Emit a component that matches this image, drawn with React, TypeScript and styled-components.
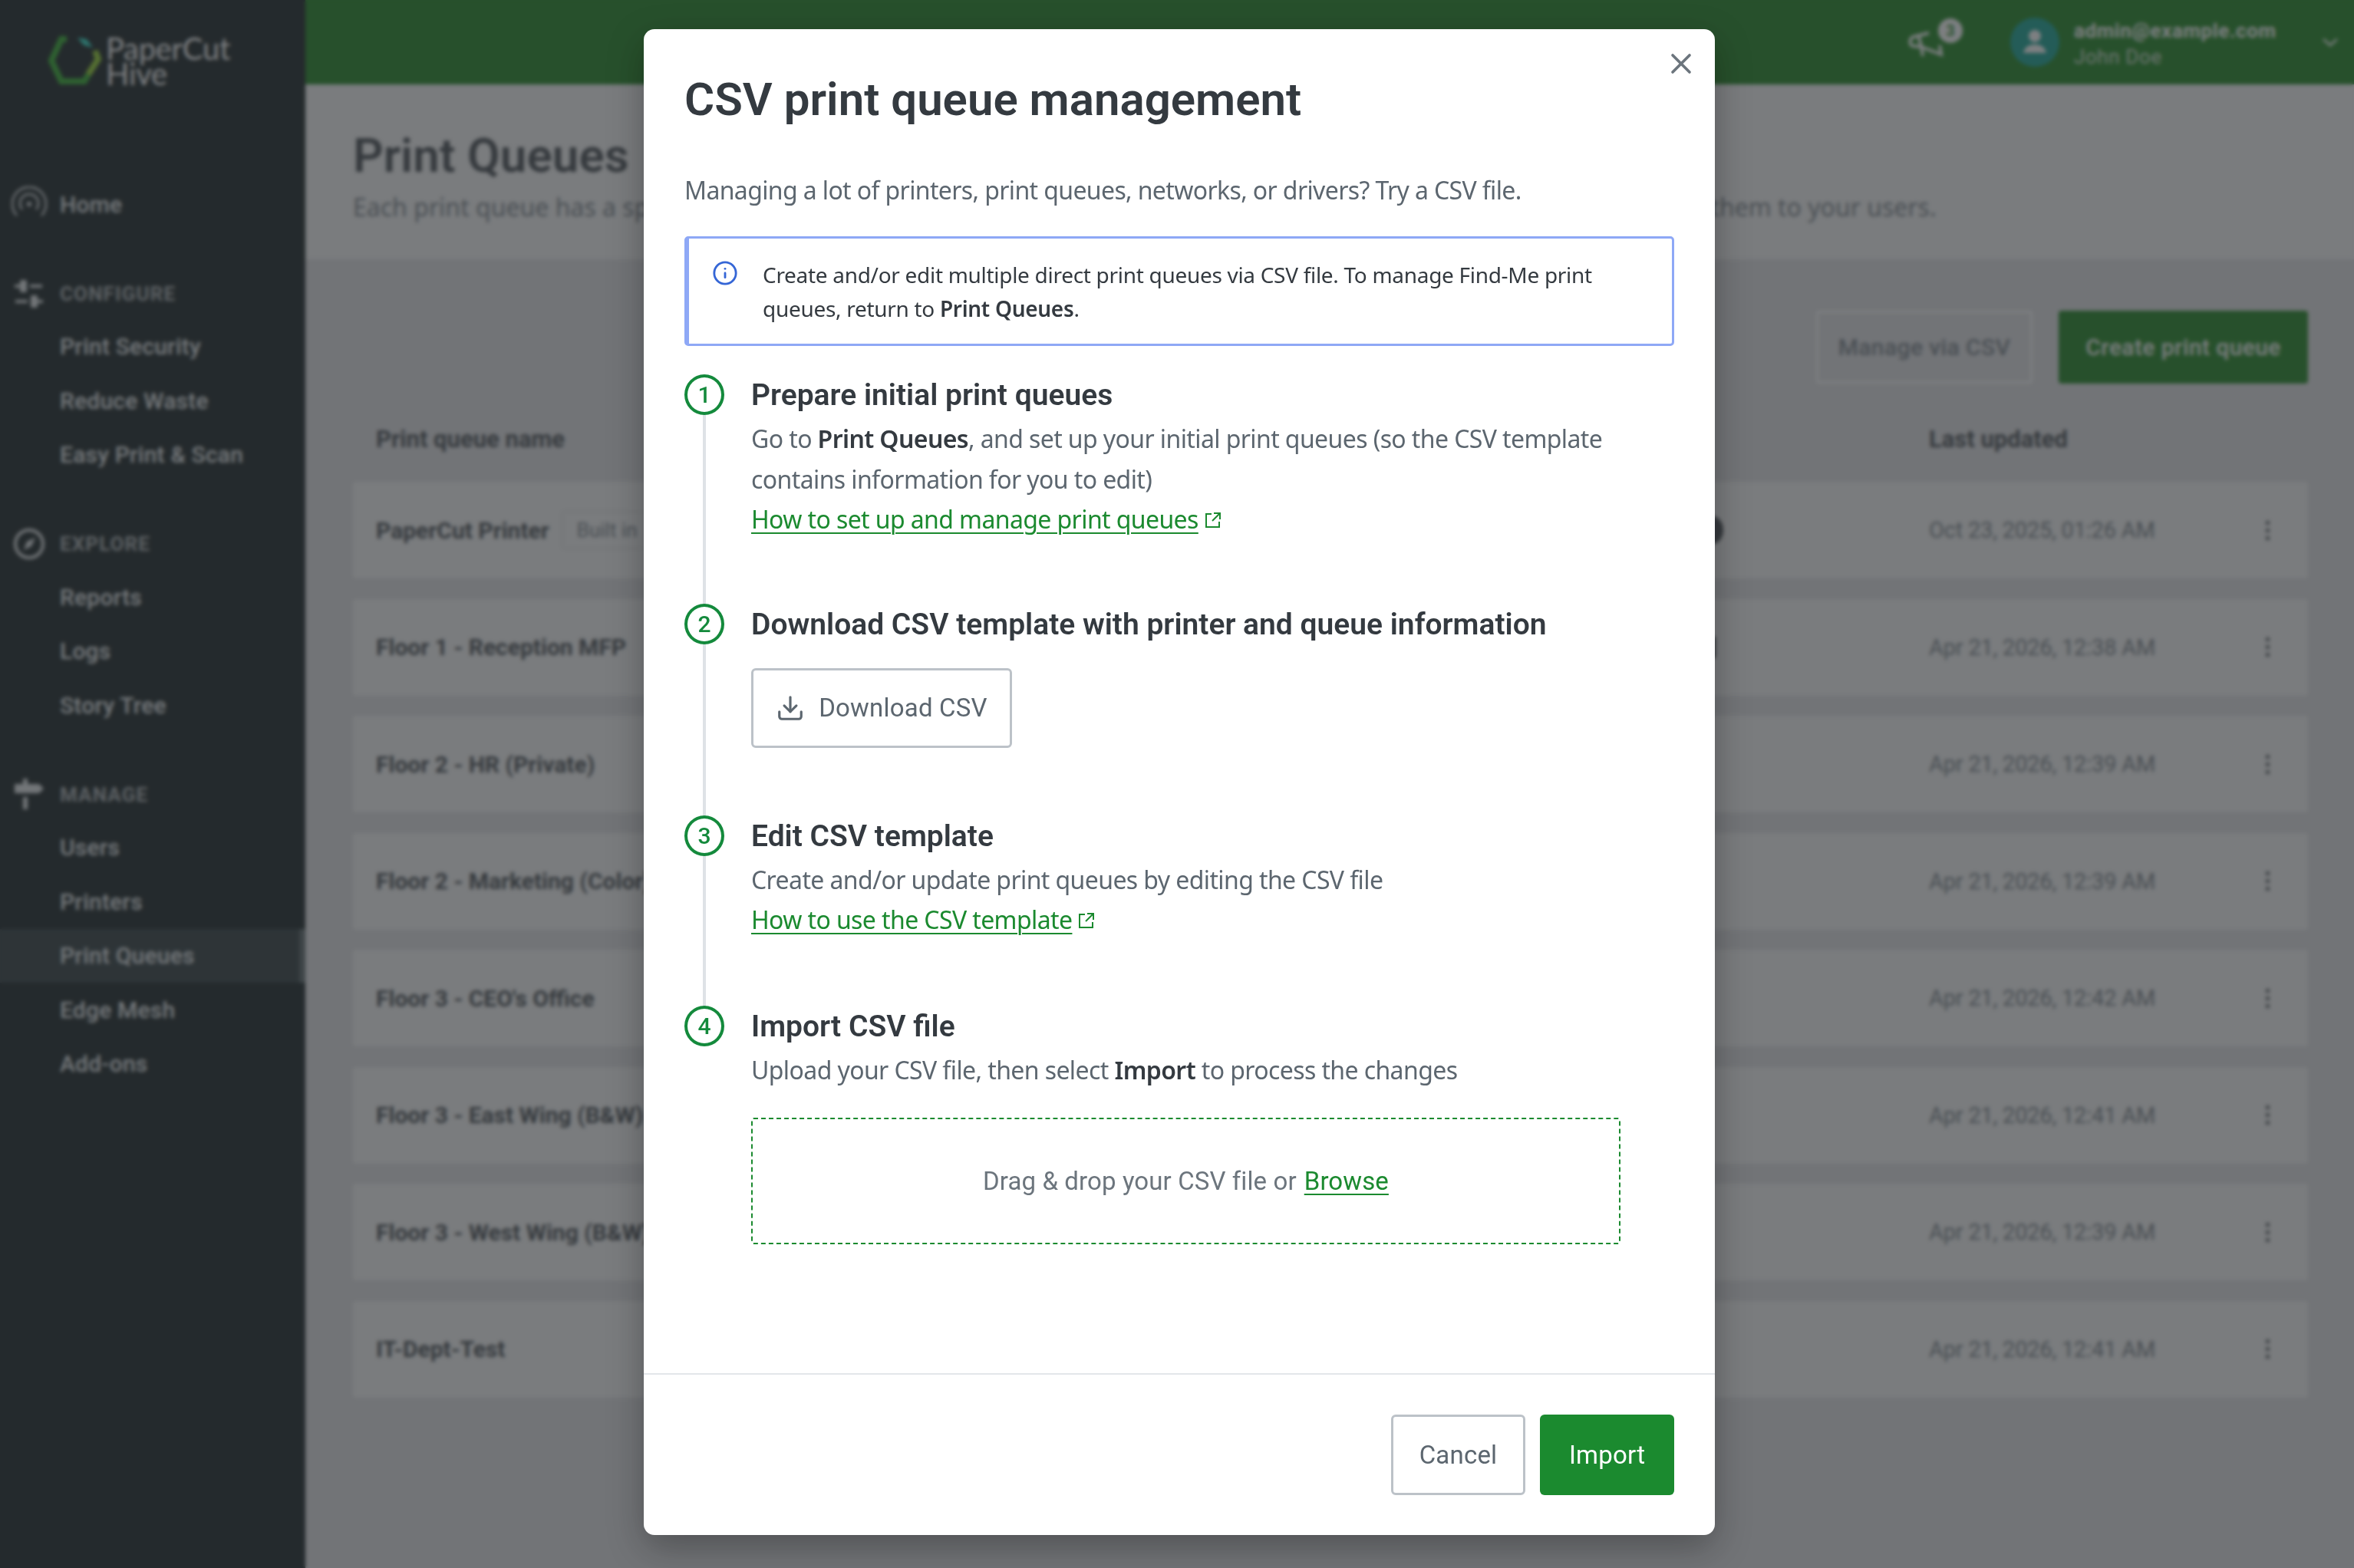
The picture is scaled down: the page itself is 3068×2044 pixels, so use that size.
import React from "react";
import styled, { createGlobalStyle } from "styled-components";
import { Download, Info, X } from "lucide-react";

const GlobalStyle = createGlobalStyle`
  html, body {
    margin: 0;
    padding: 0;
    overflow: hidden;
  }
  * {
    box-sizing: border-box;
  }
`;

const UI_FONT = `Roboto, "Liberation Sans", sans-serif`;
const BODY_FONT = `"Noto Sans", "Liberation Sans", sans-serif`;
const GREEN = "#1b8a2f";

const Shell = styled.div`
  display: flex;
  width: 3068px;
  height: 2044px;
  font-family: ${UI_FONT};
`;

const Sidebar = styled.aside`
  width: 398px;
  flex: none;
  background: #020d0f;
  color: #e8ecee;
`;

const LogoArea = styled.div`
  display: flex;
  gap: 5px;
  height: 231px;
  padding: 47px 0 0 63px;
`;

const LogoText = styled.div`
  font-family: Lato, sans-serif;
  font-size: 40px;
  line-height: 33px;
  letter-spacing: -0.3px;
  color: #ffffff;
`;

const NavRow = styled.div<{ $active?: boolean }>`
  display: flex;
  align-items: center;
  height: 70.5px;
  padding-left: 78px;
  font-size: 30px;
  font-weight: 500;
  letter-spacing: 0.2px;
  background: ${(p) => (p.$active ? "#1d2a2d" : "transparent")};
  border-right: ${(p) => (p.$active ? "8px solid #4c5a5d" : "0")};
`;

const Home = styled(NavRow)`
  gap: 17px;
  padding-left: 15px;
`;

const GroupHeader = styled.div`
  display: flex;
  align-items: center;
  gap: 17px;
  height: 68px;
  margin-top: 47px;
  padding-left: 15px;
  font-size: 26px;
  font-weight: 700;
  letter-spacing: 1.1px;
  color: #a3a9ac;
`;

const NavIcon = styled.svg`
  width: 46px;
  height: 46px;
  flex: none;
  color: #dfe3e5;
`;

const Main = styled.main`
  flex: 1;
  min-width: 0;
  display: flex;
  flex-direction: column;
  background: #dfdfe2;
`;

const TopBar = styled.header`
  display: flex;
  align-items: center;
  justify-content: flex-end;
  height: 110px;
  padding-right: 20px;
  background: #0a7a0c;
  color: #ffffff;
`;

const Bell = styled.div`
  position: relative;
  width: 50px;
  height: 44px;
  margin: 8px 84px 0 0;
`;

const BellBadge = styled.span`
  position: absolute;
  top: -13px;
  right: -22px;
  width: 32px;
  height: 32px;
  border-radius: 50%;
  background: #ffffff;
  color: #0a7a0c;
  font-size: 20px;
  font-weight: 700;
  line-height: 32px;
  text-align: center;
`;

const Avatar = styled.div`
  display: flex;
  align-items: center;
  justify-content: center;
  width: 64px;
  height: 64px;
  margin-right: 19px;
  border-radius: 50%;
  background: #009b89;
`;

const UserText = styled.div`
  width: 323px;
  padding-top: 3px;
  font-size: 26px;
  line-height: 34px;
`;

const UserEmail = styled.div`
  font-weight: 700;
  letter-spacing: 0.6px;
`;

const UserName = styled.div`
  color: #d6e2d6;
  letter-spacing: 0.6px;
`;

const PageHeader = styled.div`
  height: 228px;
  padding: 58px 0 0 62px;
  background: #f5f5f5;
`;

const PageTitle = styled.h1`
  margin: 0;
  font-size: 62px;
  line-height: 70px;
  font-weight: 600;
  color: #343a40;
`;

const PageSub = styled.p`
  margin: 10px 0 0;
  font-family: ${BODY_FONT};
  font-size: 32px;
  line-height: 44px;
  white-space: nowrap;
  color: #6c757d;
`;

const Toolbar = styled.div`
  display: flex;
  justify-content: flex-end;
  gap: 34px;
  padding: 67px 60px 0 0;
`;

const BgButton = styled.div<{ $primary?: boolean }>`
  display: flex;
  align-items: center;
  justify-content: center;
  width: ${(p) => (p.$primary ? "325px" : "282px")};
  height: 95px;
  border-radius: 4px;
  border: 3px solid ${(p) => (p.$primary ? "#0a7a0c" : "#ffffff")};
  background: ${(p) => (p.$primary ? "#0a7a0c" : "transparent")};
  color: ${(p) => (p.$primary ? "#ffffff" : "#6c757d")};
  font-size: 30px;
  font-weight: 500;
  letter-spacing: 0.4px;
`;

const queueGrid = `
  display: grid;
  grid-template-columns: 1fr 40px 262px 424px 34px;
  align-items: center;
  padding: 0 36px 0 30px;
  margin: 0 60px 0 62px;
`;

const TableHead = styled.div`
  ${queueGrid}
  height: 128px;
  padding-top: 16px;
  font-size: 31px;
  font-weight: 700;
  color: #343a40;
`;

const LastUpdated = styled.div`
  grid-column: 4;
`;

const Rows = styled.div`
  display: flex;
  flex-direction: column;
  gap: 26.5px;
`;

const Row = styled.div`
  ${queueGrid}
  height: 126px;
  border-radius: 4px;
  background: #f5f5f5;
`;

const NameCell = styled.div`
  display: flex;
  align-items: center;
  gap: 16px;
  font-size: 30px;
  font-weight: 700;
  color: #343a40;
  white-space: nowrap;
  overflow: hidden;
`;

const BuiltIn = styled.span`
  padding: 8px 18px;
  border: 2px solid #e3e3e3;
  border-radius: 4px;
  font-size: 26px;
  font-weight: 400;
  color: #6c757d;
`;

const StatusMark = styled.div<{ $kind?: "dot" | "bar" }>`
  justify-self: center;
  width: ${(p) => (p.$kind === "dot" ? "28px" : "8px")};
  height: ${(p) => (p.$kind === "dot" ? "36px" : "28px")};
  border-radius: ${(p) => (p.$kind === "dot" ? "50%" : "2px")};
  background: ${(p) => (p.$kind ? "#343a40" : "transparent")};
`;

const DateCell = styled.div`
  grid-column: 4;
  font-size: 29px;
  letter-spacing: -0.2px;
  color: #6c757d;
`;

const Kebab = styled.div`
  display: flex;
  flex-direction: column;
  align-items: center;
  gap: 5px;
`;

const KebabDot = styled.span`
  width: 5px;
  height: 5px;
  border-radius: 50%;
  background: #343a40;
`;

/* modal */

const Backdrop = styled.div`
  position: fixed;
  inset: 0;
  padding: 38px 0 0 839px;
  background: rgba(55, 58, 62, 0.65);
  backdrop-filter: blur(2.5px);
`;

const Modal = styled.div`
  position: relative;
  display: flex;
  flex-direction: column;
  width: 1396px;
  height: 1963px;
  border-radius: 14px;
  background: #ffffff;
  box-shadow: 0 16px 48px rgba(0, 0, 0, 0.3);
  font-family: ${BODY_FONT};
`;

const CloseButton = styled.div`
  position: absolute;
  top: 23px;
  right: 22px;
  color: #6c757d;
  line-height: 0;
`;

const ModalBody = styled.div`
  flex: 1;
  padding: 52px 53px 0 53px;
`;

const ModalTitle = styled.h2`
  margin: 0;
  font-family: ${UI_FONT};
  font-size: 60px;
  line-height: 80px;
  font-weight: 600;
  color: #343a40;
`;

const Lead = styled.p`
  margin: 56px 0 0;
  font-size: 32px;
  line-height: 44px;
  letter-spacing: -0.63px;
  color: #5c666f;
`;

const Alert = styled.div`
  display: flex;
  gap: 32px;
  height: 143px;
  margin: 38px 0 37px;
  padding: 25px 40px 0 30px;
  border: 3px solid #8ea8f6;
  border-left-width: 6px;
  border-radius: 5px;
  font-size: 28px;
  line-height: 44px;
  letter-spacing: -0.3px;
  color: #343a40;
`;

const AlertIcon = styled.div`
  flex: none;
  margin-top: 3px;
  color: #3566d6;
  line-height: 0;
`;

const Step = styled.section`
  display: flex;
  gap: 35px;
`;

const Rail = styled.div`
  display: flex;
  flex-direction: column;
  align-items: center;
  width: 52px;
  flex: none;
`;

const StepNumber = styled.div`
  display: flex;
  align-items: center;
  justify-content: center;
  width: 52px;
  height: 53px;
  flex: none;
  border: 4px solid #148a3c;
  border-radius: 50%;
  font-family: ${UI_FONT};
  font-size: 30px;
  font-weight: 500;
  color: #148a3c;
`;

const RailLine = styled.div`
  flex: 1;
  width: 4px;
  background: #dee2e6;
`;

const StepContent = styled.div<{ $gap: number }>`
  flex: 1;
  padding-bottom: ${(p) => p.$gap}px;
`;

const StepTitle = styled.h3`
  margin: 0 0 4px;
  font-family: ${UI_FONT};
  font-size: 39px;
  line-height: 54px;
  font-weight: 600;
  color: #343a40;
`;

const StepText = styled.p`
  margin: 0;
  font-size: 32px;
  line-height: 52.5px;
  letter-spacing: -0.6px;
  color: #5c666f;
`;

const Strong = styled.strong`
  font-weight: 600;
  color: #343a40;
`;

const HelpLink = styled.a`
  color: ${GREEN};
  text-decoration: underline;
  text-underline-offset: 5px;
  text-decoration-thickness: 2px;
`;

const LinkIcon = styled.svg`
  width: 22px;
  height: 22px;
  margin-left: 8px;
  color: ${GREEN};
`;

const Outline = styled.button`
  display: flex;
  align-items: center;
  justify-content: center;
  border: 3px solid #bcc2c8;
  border-radius: 6px;
  background: #ffffff;
  font-family: ${UI_FONT};
  font-size: 33px;
  letter-spacing: 0.2px;
  color: #5c666f;
`;

const DownloadButton = styled(Outline)`
  gap: 18px;
  width: 340px;
  height: 104px;
  margin-top: 30px;
`;

const DropZone = styled.div`
  display: flex;
  align-items: center;
  justify-content: center;
  gap: 10px;
  width: 1133px;
  height: 165px;
  margin-top: 36px;
  border: 2px dashed ${GREEN};
  border-radius: 3px;
  font-family: ${UI_FONT};
  font-size: 33px;
  letter-spacing: 0.1px;
  color: #6c757d;
`;

const ModalFooter = styled.div`
  display: flex;
  justify-content: flex-end;
  gap: 19px;
  padding: 52px 53px 52px 0;
  border-top: 2px solid #e3e6ea;
`;

const CancelButton = styled(Outline)`
  width: 175px;
  height: 105px;
`;

const ImportButton = styled.button`
  width: 175px;
  height: 105px;
  border: 0;
  border-radius: 6px;
  background: ${GREEN};
  color: #ffffff;
  font-family: ${UI_FONT};
  font-size: 33px;
  letter-spacing: 0.2px;
`;

const queues = [
  { name: "PaperCut Printer", date: "Oct 23, 2025, 01:26 AM", builtIn: true, mark: "dot" as const },
  { name: "Floor 1 - Reception MFP", date: "Apr 21, 2026, 12:38 AM", mark: "bar" as const },
  { name: "Floor 2 - HR (Private)", date: "Apr 21, 2026, 12:39 AM" },
  { name: "Floor 2 - Marketing (Color)", date: "Apr 21, 2026, 12:39 AM" },
  { name: "Floor 3 - CEO's Office", date: "Apr 21, 2026, 12:42 AM" },
  { name: "Floor 3 - East Wing (B&W)", date: "Apr 21, 2026, 12:41 AM" },
  { name: "Floor 3 - West Wing (B&W)", date: "Apr 21, 2026, 12:39 AM" },
  { name: "IT-Dept-Test", date: "Apr 21, 2026, 12:41 AM" },
];

const HiveLogo = () => (
  <svg width="70" height="64" viewBox="0 0 70 64" fill="none" strokeWidth="8">
    <path d="M24 4H17L4 32L17 59H47L52 50" stroke="#1fa81a" />
    <path d="M52 50L65 30L61 19" stroke="#8cd11c" />
    <path d="M38 2L50 4L58 15L46 12Z" fill="#1bd9c0" stroke="none" />
  </svg>
);

const HomeIcon = () => (
  <NavIcon viewBox="0 0 46 46" fill="none" stroke="currentColor" strokeWidth="2.5">
    <circle cx="23" cy="23" r="3" fill="currentColor" stroke="none" />
    <path d="M14 30a12 12 0 1 1 18 0" />
    <path d="M7 38a22 22 0 1 1 32 0" />
  </NavIcon>
);

const SlidersIcon = () => (
  <NavIcon viewBox="0 0 46 46" fill="currentColor">
    <rect x="11" y="5" width="9" height="16" rx="2" />
    <rect x="4" y="11" width="8" height="4" />
    <rect x="24" y="11" width="16" height="4" />
    <rect x="25" y="25" width="9" height="16" rx="2" />
    <rect x="5" y="31" width="16" height="4" />
    <rect x="34" y="31" width="7" height="4" />
  </NavIcon>
);

const CompassIcon = () => (
  <NavIcon viewBox="0 0 46 46" fill="none" stroke="currentColor" strokeWidth="4">
    <circle cx="23" cy="23" r="18" />
    <path d="M31 15L26 26L16 31L20 20Z" fill="currentColor" stroke="none" />
  </NavIcon>
);

const SignIcon = () => (
  <NavIcon viewBox="0 0 46 46" fill="currentColor">
    <rect x="15" y="2" width="6" height="7" />
    <path d="M4 9H36L42 15L36 21H4Z" />
    <rect x="15" y="26" width="6" height="16" />
  </NavIcon>
);

const ExternalIcon = () => (
  <LinkIcon viewBox="0 0 22 22" fill="none" stroke="currentColor" strokeWidth="2">
    <path d="M9 3H2V20H19V13" />
    <path d="M12 2H20V10" />
    <path d="M20 2L10 12" />
  </LinkIcon>
);

const Megaphone = () => (
  <svg width="50" height="44" viewBox="0 0 50 44" fill="none" stroke="#ffffff" strokeWidth="4">
    <path d="M28 6L8 11C2 13 2 22 8 23L18 24L20 36" />
    <path d="M14 8L18 24L44 34L42 22" />
  </svg>
);

const PersonIcon = () => (
  <svg width="36" height="36" viewBox="0 0 36 36" fill="#ffffff">
    <circle cx="18" cy="10" r="8" />
    <path d="M3 32C5 23 12 21 18 21C24 21 31 23 33 32Z" />
  </svg>
);

const Chevron = () => (
  <svg width="22" height="14" viewBox="0 0 22 14" fill="none" stroke="#ffffff" strokeWidth="2.5">
    <path d="M2 3L11 11L20 3" />
  </svg>
);

const nav = [
  { title: "CONFIGURE", icon: <SlidersIcon />, items: ["Print Security", "Reduce Waste", "Easy Print & Scan"] },
  { title: "EXPLORE", icon: <CompassIcon />, items: ["Reports", "Logs", "Story Tree"] },
  { title: "MANAGE", icon: <SignIcon />, items: ["Users", "Printers", "Print Queues", "Edge Mesh", "Add-ons"] },
];

export default function App() {
  return (
    <>
      <GlobalStyle />
      <Shell>
        <Sidebar>
          <LogoArea>
            <HiveLogo />
            <LogoText>
              PaperCut
              <br />
              Hive
            </LogoText>
          </LogoArea>
          <Home>
            <HomeIcon />
            Home
          </Home>
          {nav.map((group) => (
            <div key={group.title}>
              <GroupHeader>
                {group.icon}
                {group.title}
              </GroupHeader>
              {group.items.map((item) => (
                <NavRow key={item} $active={item === "Print Queues"}>
                  {item}
                </NavRow>
              ))}
            </div>
          ))}
        </Sidebar>
        <Main>
          <TopBar>
            <Bell>
              <Megaphone />
              <BellBadge>3</BellBadge>
            </Bell>
            <Avatar>
              <PersonIcon />
            </Avatar>
            <UserText>
              <UserEmail>admin@example.com</UserEmail>
              <UserName>John Doe</UserName>
            </UserText>
            <Chevron />
          </TopBar>
          <PageHeader>
            <PageTitle>Print Queues</PageTitle>
            <PageSub>
              Each print queue has a specific set of printers, and users can release jobs at any of them. Create queues,
              then publish them to your users.
            </PageSub>
          </PageHeader>
          <Toolbar>
            <BgButton>Manage via CSV</BgButton>
            <BgButton $primary>Create print queue</BgButton>
          </Toolbar>
          <TableHead>
            <div>Print queue name</div>
            <LastUpdated>Last updated</LastUpdated>
          </TableHead>
          <Rows>
            {queues.map((q) => (
              <Row key={q.name}>
                <NameCell>
                  {q.name}
                  {q.builtIn && <BuiltIn>Built in</BuiltIn>}
                </NameCell>
                <StatusMark $kind={q.mark} />
                <DateCell>{q.date}</DateCell>
                <Kebab>
                  <KebabDot />
                  <KebabDot />
                  <KebabDot />
                </Kebab>
              </Row>
            ))}
          </Rows>
        </Main>
      </Shell>
      <Backdrop>
        <Modal>
          <CloseButton>
            <X size={44} strokeWidth={2} />
          </CloseButton>
          <ModalBody>
            <ModalTitle>CSV print queue management</ModalTitle>
            <Lead>Managing a lot of printers, print queues, networks, or drivers? Try a CSV file.</Lead>
            <Alert>
              <AlertIcon>
                <Info size={34} strokeWidth={2} />
              </AlertIcon>
              <div>
                Create and/or edit multiple direct print queues via CSV file. To manage Find-Me print queues, return to{" "}
                <Strong>Print Queues</Strong>.
              </div>
            </Alert>
            <Step>
              <Rail>
                <StepNumber>1</StepNumber>
                <RailLine />
              </Rail>
              <StepContent $gap={83}>
                <StepTitle>Prepare initial print queues</StepTitle>
                <StepText>
                  Go to <Strong>Print Queues</Strong>, and set up your initial print queues (so the CSV template contains
                  information for you to edit)
                </StepText>
                <StepText>
                  <HelpLink>How to set up and manage print queues</HelpLink>
                  <ExternalIcon />
                </StepText>
              </StepContent>
            </Step>
            <Step>
              <Rail>
                <StepNumber>2</StepNumber>
                <RailLine />
              </Rail>
              <StepContent $gap={88}>
                <StepTitle>Download CSV template with printer and queue information</StepTitle>
                <DownloadButton>
                  <Download size={38} strokeWidth={2} />
                  Download CSV
                </DownloadButton>
              </StepContent>
            </Step>
            <Step>
              <Rail>
                <StepNumber>3</StepNumber>
                <RailLine />
              </Rail>
              <StepContent $gap={85}>
                <StepTitle>Edit CSV template</StepTitle>
                <StepText>Create and/or update print queues by editing the CSV file</StepText>
                <StepText>
                  <HelpLink>How to use the CSV template</HelpLink>
                  <ExternalIcon />
                </StepText>
              </StepContent>
            </Step>
            <Step>
              <Rail>
                <StepNumber>4</StepNumber>
              </Rail>
              <StepContent $gap={0}>
                <StepTitle>Import CSV file</StepTitle>
                <StepText>
                  Upload your CSV file, then select <Strong>Import</Strong> to process the changes
                </StepText>
                <DropZone>
                  <span>Drag & drop your CSV file or</span>
                  <HelpLink>Browse</HelpLink>
                </DropZone>
              </StepContent>
            </Step>
          </ModalBody>
          <ModalFooter>
            <CancelButton>Cancel</CancelButton>
            <ImportButton>Import</ImportButton>
          </ModalFooter>
        </Modal>
      </Backdrop>
    </>
  );
}
